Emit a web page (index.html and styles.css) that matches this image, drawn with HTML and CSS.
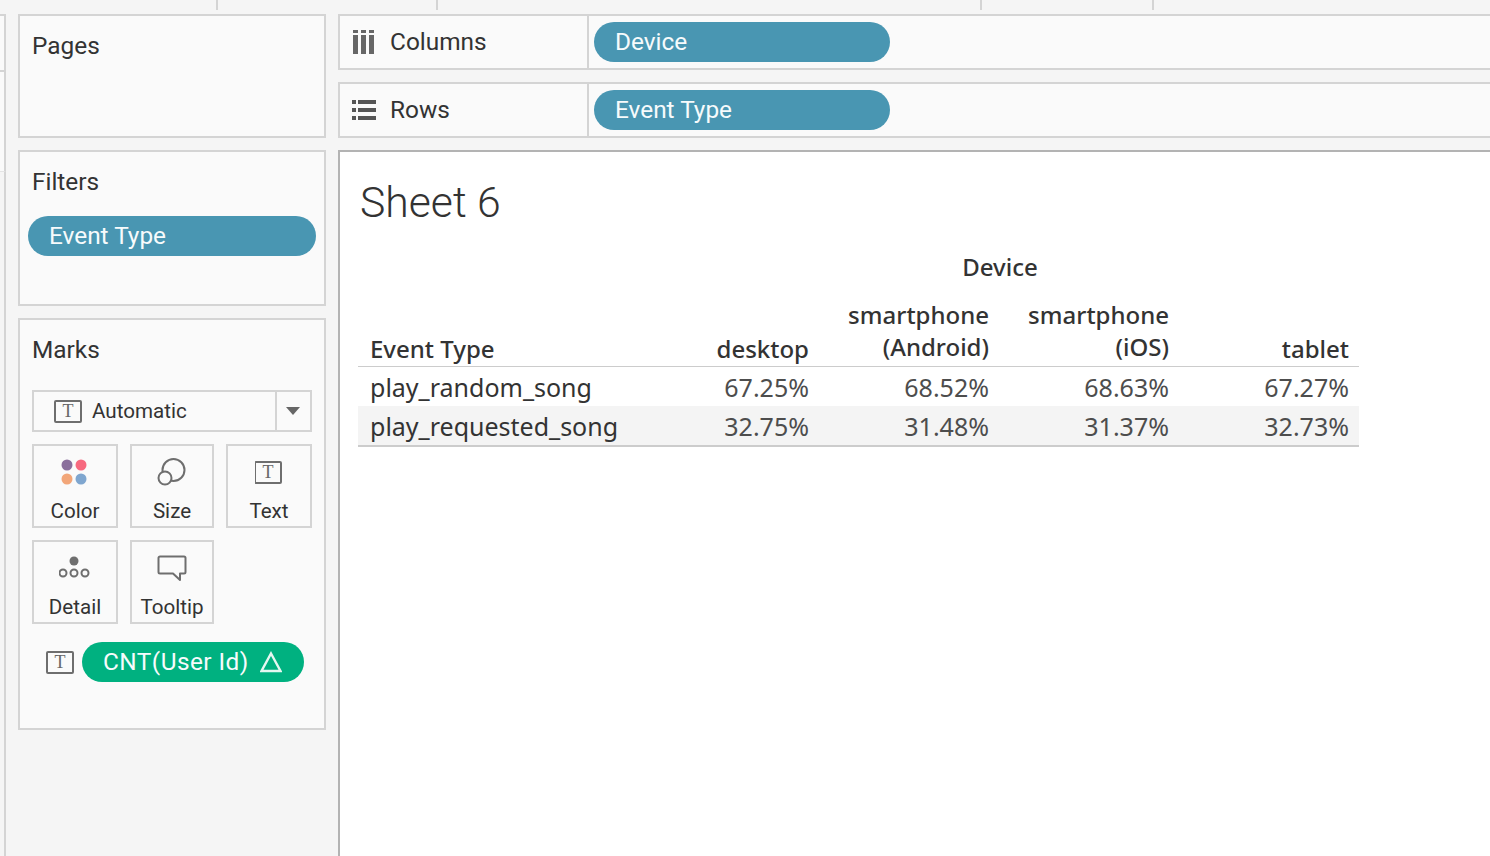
FILE: index.html
```html
<!DOCTYPE html>
<html lang="en">
<head>
    <meta charset="UTF-8">
    <meta name="viewport" content="width=device-width, initial-scale=1.0">
    <title>Sheet 6</title>
    <link rel="stylesheet" href="styles.css">
</head>
<body>
    <div class="topbar">
        <span class="tick tick1"></span>
        <span class="tick tick2"></span>
        <span class="tick tick3"></span>
        <span class="tick tick4"></span>
    </div>
    <div class="workspace">
        <div class="edge">
            <div class="edge-box edge-a"></div>
            <div class="edge-box edge-b"></div>
            <div class="edge-box edge-c"></div>
        </div>
        <div class="sidebar">
            <div class="card pages">
                <div class="card-title">Pages</div>
            </div>
            <div class="card filters">
                <div class="card-title">Filters</div>
                <div class="pill pill-blue">Event Type</div>
            </div>
            <div class="card marks">
                <div class="card-title">Marks</div>
                <div class="mark-select">
                    <svg class="t-icon" width="28" height="24" viewBox="0 0 28 24">
                        <rect x="1" y="2" width="26" height="21" rx="1" fill="none" stroke="#6e6e6e" stroke-width="2"/>
                        <text x="14" y="18" text-anchor="middle" class="t-glyph">T</text>
                    </svg>
                    <span class="mark-select-label">Automatic</span>
                    <span class="mark-select-arrow"><span class="arrow"></span></span>
                </div>
                <div class="mark-grid">
                    <div class="mark-btn wide">
                        <svg width="28" height="28" viewBox="1 0 28 28">
                            <circle cx="7" cy="7" r="5.500" fill="#8a6f9c"/>
                            <circle cx="21" cy="7" r="5.500" fill="#f7697f"/>
                            <circle cx="7" cy="21" r="5.500" fill="#f2a679"/>
                            <circle cx="21" cy="21" r="5.500" fill="#7fa6cf"/>
                        </svg>
                        <span>Color</span>
                    </div>
                    <div class="mark-btn">
                        <svg width="30" height="28" viewBox="0 0 30 28">
                            <circle cx="16.500" cy="12" r="11" fill="none" stroke="#6e6e6e" stroke-width="2"/>
                            <circle cx="8" cy="20" r="6.500" fill="#fafafa" stroke="#6e6e6e" stroke-width="2"/>
                        </svg>
                        <span>Size</span>
                    </div>
                    <div class="mark-btn wide">
                        <svg width="28" height="28" viewBox="1 0 28 28">
                            <rect x="1" y="4" width="26" height="21" rx="1" fill="none" stroke="#6e6e6e" stroke-width="2"/>
                            <text x="14" y="20" text-anchor="middle" class="t-glyph">T</text>
                        </svg>
                        <span>Text</span>
                    </div>
                    <div class="mark-btn wide">
                        <svg width="32" height="28" viewBox="1 0 32 28">
                            <circle cx="16" cy="7" r="4.500" fill="#6e6e6e"/>
                            <circle cx="5" cy="19" r="3.500" fill="none" stroke="#6e6e6e" stroke-width="2"/>
                            <circle cx="16" cy="19" r="3.500" fill="none" stroke="#6e6e6e" stroke-width="2"/>
                            <circle cx="27" cy="19" r="3.500" fill="none" stroke="#6e6e6e" stroke-width="2"/>
                        </svg>
                        <span>Detail</span>
                    </div>
                    <div class="mark-btn">
                        <svg width="30" height="28" viewBox="0 0 30 28">
                            <path d="M3 2.500H27a1.500 1.500 0 0 1 1.500 1.500V18a1.500 1.500 0 0 1-1.500 1.500H23V26L16 19.500H3A1.500 1.500 0 0 1 1.500 18V4A1.500 1.500 0 0 1 3 2.500Z" fill="none" stroke="#6e6e6e" stroke-width="2" stroke-linejoin="round"/>
                        </svg>
                        <span>Tooltip</span>
                    </div>
                </div>
                <div class="mark-field">
                    <svg width="28" height="24" viewBox="0 0 28 24">
                        <rect x="1" y="2" width="26" height="21" rx="1" fill="none" stroke="#6e6e6e" stroke-width="2"/>
                        <text x="14" y="18" text-anchor="middle" class="t-glyph">T</text>
                    </svg>
                    <div class="pill pill-green">
                        <span>CNT(User Id)</span>
                        <svg width="22" height="22" viewBox="0 0 22 22">
                            <path d="M11 2.500L20.500 20H1.500Z" fill="none" stroke="#e6f7f1" stroke-width="2.400"/>
                        </svg>
                    </div>
                </div>
            </div>
        </div>
        <div class="main">
            <div class="shelf">
                <div class="shelf-label">
                    <span class="shelf-icon">
                        <svg class="columns-icon" width="21" height="24" viewBox="0 0 21 24">
                            <path d="M0 0h5v3H0zM0 5h5v19H0zM8 0h5v3H8zM8 5h5v19H8zM16 0h5v3h-5zM16 5h5v19h-5z" fill="#666"/>
                        </svg>
                    </span>
                    <span class="shelf-text">Columns</span>
                </div>
                <div class="shelf-drop"><div class="pill pill-blue pill-shelf">Device</div></div>
            </div>
            <div class="shelf">
                <div class="shelf-label">
                    <span class="shelf-icon">
                        <svg width="24" height="20" viewBox="0 0 24 20">
                            <path d="M0 0h4v4H0zM6 0h18v4H6zM0 8h4v4H0zM6 8h18v4H6zM0 16h4v4H0zM6 16h18v4H6z" fill="#555"/>
                        </svg>
                    </span>
                    <span class="shelf-text">Rows</span>
                </div>
                <div class="shelf-drop"><div class="pill pill-blue pill-shelf">Event Type</div></div>
            </div>
            <div class="view">
                <h1 class="sheet-title">Sheet 6</h1>
                <table class="crosstab">
                    <thead>
                        <tr class="device-row">
                            <th class="col-name"></th>
                            <th colspan="4" class="device-head">Device</th>
                        </tr>
                        <tr class="head-row">
                            <th class="col-name one-line">Event Type</th>
                            <th class="num one-line">desktop</th>
                            <th class="num">smartphone<br>(Android)</th>
                            <th class="num">smartphone<br>(iOS)</th>
                            <th class="num one-line">tablet</th>
                        </tr>
                    </thead>
                    <tbody>
                        <tr>
                            <td class="col-name">play_random_song</td>
                            <td class="num">67.25%</td>
                            <td class="num">68.52%</td>
                            <td class="num">68.63%</td>
                            <td class="num">67.27%</td>
                        </tr>
                        <tr class="alt">
                            <td class="col-name">play_requested_song</td>
                            <td class="num">32.75%</td>
                            <td class="num">31.48%</td>
                            <td class="num">31.37%</td>
                            <td class="num">32.73%</td>
                        </tr>
                    </tbody>
                </table>
            </div>
        </div>
    </div>
</body>
</html>
```

FILE: styles.css
```css
html, body {
    margin: 0;
    height: 100%;
    overflow: hidden;
}
body {
    font-family: "Roboto", "Liberation Sans", sans-serif;
    background-color: #f5f5f5;
    color: #333;
}
.topbar {
    display: flex;
    height: 14px;
}
.tick {
    width: 2px;
    height: 10px;
    background: #d4d4d4;
}
.tick1 { margin-left: 216px; }
.tick2 { margin-left: 218px; }
.tick3 { margin-left: 542px; }
.tick4 { margin-left: 170px; }
.workspace {
    display: flex;
    height: 842px;
}
.edge {
    width: 6px;
    margin-right: 12px;
    flex-shrink: 0;
    display: flex;
    flex-direction: column;
}
.edge-box {
    box-sizing: border-box;
    border-right: 2px solid #d4d4d4;
    background: #fafafa;
}
.edge-a {
    height: 58px;
    border-top: 2px solid #d4d4d4;
    border-bottom: 2px solid #d4d4d4;
}
.edge-b {
    height: 100px;
    border-bottom: 1px solid #e4e4e4;
}
.edge-c {
    flex: 1;
    background: #f5f5f5;
}
.sidebar {
    width: 308px;
    flex-shrink: 0;
    display: flex;
    flex-direction: column;
    gap: 12px;
    margin-right: 12px;
}
.card {
    box-sizing: border-box;
    background: #fafafa;
    border: 2px solid #d4d4d4;
    padding: 0 12px;
}
.pages { height: 124px; }
.filters { height: 156px; }
.marks { height: 412px; }
.card-title {
    font-size: 24.400px;
    line-height: 30px;
    margin-top: 15px;
}
.pill {
    box-sizing: border-box;
    height: 40px;
    border-radius: 20px;
    color: #f7fbfc;
    font-size: 24.400px;
    line-height: 40px;
    padding: 0 21px;
}
.pill-blue {
    background: #4996b2;
}
.filters .pill {
    margin: 19px -4px 0 -4px;
}
.mark-select {
    box-sizing: border-box;
    height: 42px;
    margin-top: 25px;
    border: 2px solid #d4d4d4;
    display: flex;
    align-items: center;
    padding-left: 20px;
    font-size: 20.600px;
}
.mark-select-label {
    margin-left: 10px;
    flex: 1;
}
.mark-select-arrow {
    width: 33px;
    height: 100%;
    border-left: 2px solid #d4d4d4;
    display: flex;
    align-items: center;
    justify-content: center;
}
.arrow {
    width: 0;
    height: 0;
    margin-right: 2px;
    border-left: 7px solid transparent;
    border-right: 7px solid transparent;
    border-top: 8px solid #666;
}
.mark-grid {
    display: grid;
    grid-template-columns: 86px 84px 86px;
    grid-auto-rows: 84px;
    gap: 12px;
    margin-top: 12px;
}
.mark-btn {
    box-sizing: border-box;
    border: 2px solid #d4d4d4;
    display: flex;
    flex-direction: column;
    align-items: center;
    padding-top: 12px;
    font-size: 20.600px;
}
.mark-btn svg {
    height: 28px;
    margin-bottom: 13px;
}
.t-glyph {
    font-family: "Liberation Serif", serif;
    font-size: 18px;
    fill: #666;
}
.mark-field {
    display: flex;
    align-items: center;
    gap: 8px;
    margin-top: 18px;
    padding-left: 14px;
}
.pill-green {
    width: 222px;
    background: #00b180;
    display: flex;
    align-items: center;
    gap: 11px;
    letter-spacing: 0.450px;
}
.main {
    flex: 1;
    min-width: 0;
    display: flex;
    flex-direction: column;
    gap: 12px;
}
.shelf {
    box-sizing: border-box;
    height: 56px;
    background: #fafafa;
    border: 2px solid #d4d4d4;
    border-right: none;
    display: flex;
}
.shelf-label {
    width: 249px;
    box-sizing: border-box;
    border-right: 2px solid #d4d4d4;
    display: flex;
    align-items: center;
    padding-left: 12px;
    font-size: 24.400px;
}
.shelf-text {
    margin-bottom: 1px;
}
.shelf-icon {
    width: 38px;
    display: flex;
    align-items: center;
}
.columns-icon {
    margin-left: 1px;
}
.shelf-drop {
    padding: 6px 5px;
}
.pill-shelf {
    width: 296px;
}
.view {
    flex: 1;
    box-sizing: border-box;
    background: #fff;
    border-top: 2px solid #b3b3b3;
    border-left: 2px solid #b3b3b3;
    padding: 0 0 0 18px;
}
.sheet-title {
    margin: 24px 0 0 2px;
    font-size: 42.700px;
    line-height: 52px;
    font-weight: 300;
}
.crosstab {
    width: 1001px;
    border-collapse: collapse;
    table-layout: fixed;
    font-family: "Noto Sans", sans-serif;
    font-size: 25px;
    margin-top: 23px;
}
.crosstab th {
    font-weight: 500;
    font-size: 24px;
    padding: 0 10px 0 12px;
    vertical-align: bottom;
    line-height: 32px;
}
.crosstab td {
    padding: 0 10px 0 12px;
    height: 39px;
    line-height: 32px;
}
.col-name {
    width: 259px;
    text-align: left;
}
.crosstab .device-head {
    text-align: center;
    height: 30px;
}
.num {
    text-align: right;
}
.crosstab td.num {
    color: #4d4d4d;
}
.crosstab .head-row th {
    border-bottom: 1px solid #ccc;
    padding-top: 16px;
    padding-bottom: 3px;
}
.crosstab .head-row .one-line {
    padding-bottom: 1px;
}
.alt td {
    background: #f4f4f4;
    border-bottom: 2px solid #ccc;
}
```
